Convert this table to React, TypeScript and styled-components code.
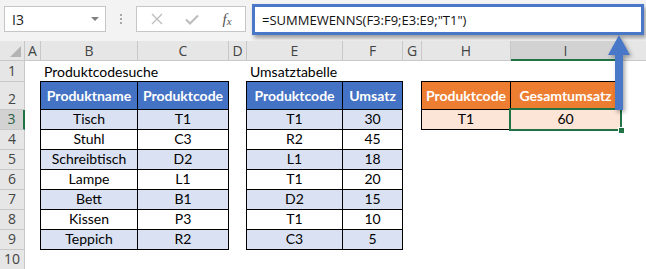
import React from 'react';
import styled, { createGlobalStyle } from 'styled-components';

const GlobalStyle = createGlobalStyle`
  html, body {
    margin: 0;
    padding: 0;
    background: #fff;
  }
  body {
    width: 646px;
    height: 269px;
    overflow: hidden;
    font-family: 'Lato', 'Liberation Sans', sans-serif;
  }
`;

const EXCEL_GREEN = '#217346';
const HEADER_BG = '#e6e6e6';
const HEADER_LINE = '#c8c8c8';

// the last column runs on past the right edge, its letter is not in view
const COLUMNS = ['A', 'B', 'C', 'D', 'E', 'F', 'G', 'H', 'I', ''];
const COL_TRACKS = '25px 16px 97px 91px 18px 96px 60px 19px 89px 110px 90px';
const ROW_TRACKS = '20px 21px 28px repeat(8, 20px)';

const products = [
  ['Tisch', 'T1'],
  ['Stuhl', 'C3'],
  ['Schreibtisch', 'D2'],
  ['Lampe', 'L1'],
  ['Bett', 'B1'],
  ['Kissen', 'P3'],
  ['Teppich', 'R2'],
];

const sales = [
  ['T1', '30'],
  ['R2', '45'],
  ['L1', '18'],
  ['T1', '20'],
  ['D2', '15'],
  ['T1', '10'],
  ['C3', '5'],
];

const App = () => {
  return (
    <Workbook>
      <GlobalStyle />
      <FormulaBar>
        <NameBox>
          I3
          <DropArrow />
        </NameBox>
        <Grip>
          <span />
          <span />
          <span />
        </Grip>
        <FxButtons>
          <svg width="12" height="12" viewBox="0 0 12 12">
            <path d="M1 1L11 11M11 1L1 11" stroke="#bcbcbc" strokeWidth="1.3" fill="none" />
          </svg>
          <svg width="14" height="11" viewBox="0 0 14 11">
            <path d="M1 5.5L5 9.5L13 1.5" stroke="#bcbcbc" strokeWidth="2" fill="none" />
          </svg>
          <Fx>
            f<sub>x</sub>
          </Fx>
        </FxButtons>
        <FormulaInput>=SUMMEWENNS(F3:F9;E3:E9;"T1")</FormulaInput>
      </FormulaBar>

      <Sheet>
        <Corner />
        {COLUMNS.map((c, i) => (
          <ColHeader key={i} $active={c === 'I'}>
            {c}
          </ColHeader>
        ))}
        {Array.from({ length: 10 }, (_, i) => (
          <RowHeader key={i} $active={i === 2}>
            {i + 1}
          </RowHeader>
        ))}

        <Caption $col={3}>Produktcodesuche</Caption>
        <Caption $col={6}>Umsatztabelle</Caption>

        <DataTable
          col="3 / 5"
          widths="97px 91px"
          head={['Produktname', 'Produktcode']}
          headFill="#4472c4"
          rows={products}
          stripe="#d9e1f2"
        />
        <DataTable
          col="6 / 8"
          widths="96px 60px"
          head={['Produktcode', 'Umsatz']}
          headFill="#4472c4"
          rows={sales}
          stripe="#d9e1f2"
        />
        <DataTable
          col="9 / 11"
          widths="89px 110px"
          head={['Produktcode', 'Gesamtumsatz']}
          headFill="#ed7d31"
          rows={[['T1', '60']]}
          stripe="#fce4d6"
        />

        <Selection>
          <FillHandle />
        </Selection>
      </Sheet>

      <Arrow width="28" height="80" viewBox="0 0 28 80">
        <path d="M13 1L24 21H17V76H9V21H2Z" fill="#4a78c9" />
      </Arrow>
    </Workbook>
  );
};

type TableProps = {
  col: string;
  widths: string;
  head: string[];
  headFill: string;
  rows: string[][];
  stripe: string;
};

const DataTable = ({ col, widths, head, headFill, rows, stripe }: TableProps) => (
  <TableFrame $col={col} $widths={widths}>
    {head.map((h) => (
      <Cell key={h} $fill={headFill} $head>
        {h}
      </Cell>
    ))}
    {rows.map((row, r) =>
      row.map((v, c) => (
        <Cell key={`${r}-${c}`} $fill={r % 2 === 0 ? stripe : '#fff'}>
          {v}
        </Cell>
      ))
    )}
  </TableFrame>
);

export default App;

const Workbook = styled.div`
  position: relative;
  width: 646px;
  height: 269px;
  overflow: hidden;
  background: #fff;
`;

const FormulaBar = styled.div`
  display: flex;
  align-items: flex-start;
  box-sizing: border-box;
  height: 41px;
  padding: 6px 2px 0 4px;
  background: #f3f3f3;
`;

const NameBox = styled.div`
  display: flex;
  align-items: center;
  box-sizing: border-box;
  width: 102px;
  height: 26px;
  padding-left: 7px;
  background: #fff;
  border: 1px solid #c6c6c6;
  font: 14px 'Open Sans', sans-serif;
  color: #222;
`;

const DropArrow = styled.span`
  margin-left: auto;
  margin-right: 6px;
  border-left: 4px solid transparent;
  border-right: 4px solid transparent;
  border-top: 4px solid #7f7f7f;
`;

const Grip = styled.div`
  display: flex;
  flex-direction: column;
  gap: 2px;
  margin: 8px 14px 0 14px;

  span {
    width: 2px;
    height: 2px;
    background: #a8a8a8;
  }
`;

const FxButtons = styled.div`
  display: grid;
  grid-template-columns: 40px 30px 40px;
  align-items: center;
  justify-items: center;
  box-sizing: border-box;
  width: 110px;
  height: 26px;
  background: #fff;
  border: 1px solid #c6c6c6;
`;

const Fx = styled.span`
  font: italic 15px 'Liberation Serif', serif;
  color: #555;

  sub {
    font-size: 11px;
    vertical-align: -1px;
  }
`;

const FormulaInput = styled.div`
  flex: 1;
  display: flex;
  align-items: center;
  box-sizing: border-box;
  height: 31px;
  margin: -2px 0 0 6px;
  padding-left: 7px;
  background: #fff;
  border: 3px solid #4a78c9;
  box-shadow: 2px 3px 4px rgba(0, 0, 0, 0.35);
  font: 13px 'Open Sans', sans-serif;
  color: #111;
  white-space: nowrap;
`;

const Sheet = styled.div`
  display: grid;
  grid-template-columns: ${COL_TRACKS};
  grid-template-rows: ${ROW_TRACKS};
  background: #fff;
`;

const HeaderBase = styled.div`
  display: flex;
  box-sizing: border-box;
  background: ${HEADER_BG};
  border-right: 1px solid ${HEADER_LINE};
  border-bottom: 1px solid ${HEADER_LINE};
  font: 14px 'Open Sans', sans-serif;
  color: #444;
`;

const Corner = styled(HeaderBase)`
  position: relative;

  &::after {
    content: '';
    position: absolute;
    right: 3px;
    bottom: 3px;
    border-left: 11px solid transparent;
    border-bottom: 11px solid #b4b4b4;
  }
`;

const ColHeader = styled(HeaderBase)<{ $active?: boolean }>`
  align-items: center;
  justify-content: center;
  background: ${(p) => (p.$active ? '#d2d2d2' : HEADER_BG)};
  border-bottom: ${(p) => (p.$active ? `2px solid ${EXCEL_GREEN}` : `1px solid ${HEADER_LINE}`)};
`;

const RowHeader = styled(HeaderBase)<{ $active?: boolean }>`
  grid-column: 1;
  align-items: flex-end;
  justify-content: center;
  padding-bottom: 1px;
  background: ${(p) => (p.$active ? '#d2d2d2' : HEADER_BG)};
  border-right: ${(p) => (p.$active ? `2px solid ${EXCEL_GREEN}` : `1px solid ${HEADER_LINE}`)};
  color: ${(p) => (p.$active ? '#2b5f45' : '#444')};
`;

const Caption = styled.div<{ $col: number }>`
  grid-column: ${(p) => p.$col};
  grid-row: 2;
  display: flex;
  align-items: flex-end;
  padding: 0 0 1px 3px;
  font-size: 14px;
  line-height: 18px;
  white-space: nowrap;
  color: #000;
`;

const TableFrame = styled.div<{ $col: string; $widths: string }>`
  grid-column: ${(p) => p.$col};
  grid-row: 3 / 12;
  align-self: start;
  display: grid;
  grid-template-columns: ${(p) => p.$widths};
  grid-template-rows: 28px;
  grid-auto-rows: 20px;
  margin: -1px 0 0 -1px;
  border-left: 1px solid #000;
  border-top: 1px solid #000;
`;

const Cell = styled.div<{ $fill: string; $head?: boolean }>`
  display: flex;
  align-items: flex-end;
  justify-content: center;
  box-sizing: border-box;
  padding-bottom: ${(p) => (p.$head ? 4 : 1)}px;
  background: ${(p) => p.$fill};
  border-right: 1px solid #000;
  border-bottom: 1px solid #000;
  font-size: 14px;
  line-height: 18px;
  font-weight: ${(p) => (p.$head ? 700 : 400)};
  color: ${(p) => (p.$head ? '#fff' : '#000')};
  white-space: nowrap;
`;

const Selection = styled.div`
  grid-column: 10;
  grid-row: 4;
  position: relative;
  z-index: 2;
  margin: -2px -1px -1px -2px;
  border: 2px solid ${EXCEL_GREEN};
  pointer-events: none;
`;

const FillHandle = styled.div`
  position: absolute;
  right: -5px;
  bottom: -5px;
  width: 5px;
  height: 5px;
  background: ${EXCEL_GREEN};
  border: 1px solid #fff;
`;

const Arrow = styled.svg`
  position: absolute;
  left: 606px;
  top: 34px;
  z-index: 3;
  filter: drop-shadow(2px 2px 2px rgba(0, 0, 0, 0.35));
`;
